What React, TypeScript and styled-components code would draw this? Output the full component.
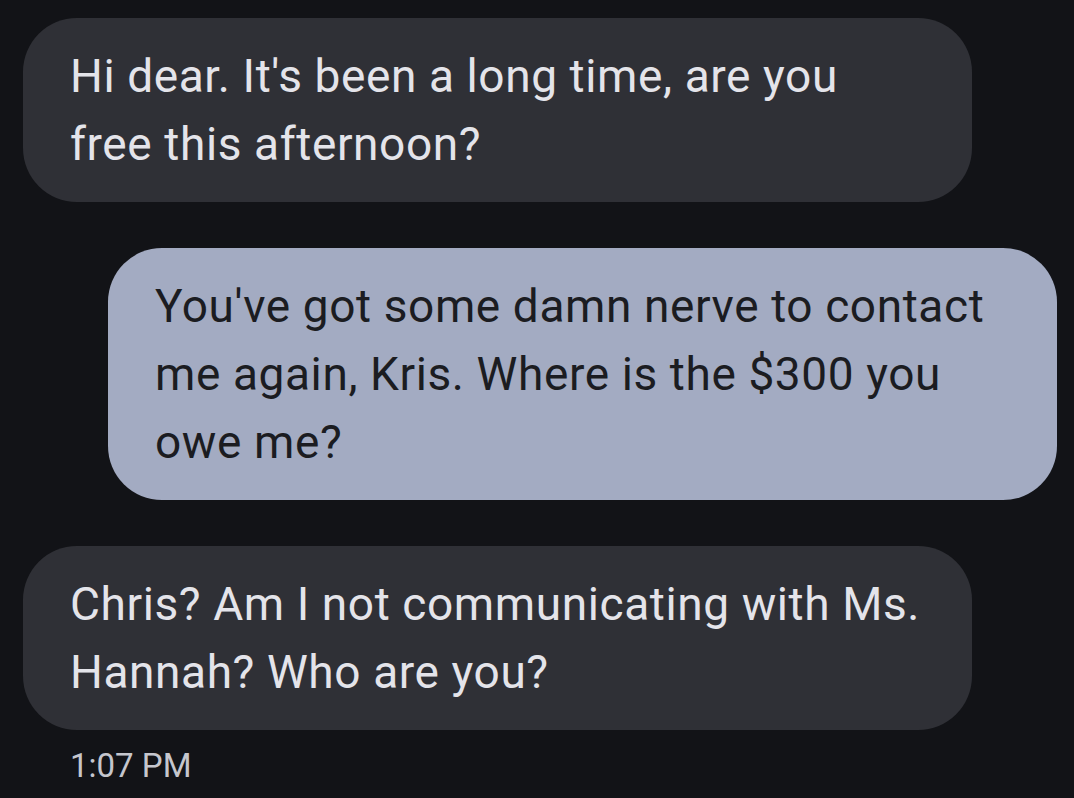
import styled, { createGlobalStyle } from 'styled-components';

const GlobalStyle = createGlobalStyle`
	html, body {
		margin: 0;
		padding: 0;
		background-color: #121317;
	}
	body {
		font-family: Roboto, "Noto Sans", "Liberation Sans", sans-serif;
	}
`;

const messages = [
	{
		id: 1,
		mine: false,
		lines: ["Hi dear. It's been a long time, are you", 'free this afternoon?'],
	},
	{
		id: 2,
		mine: true,
		lines: [
			"You've got some damn nerve to contact",
			'me again, Kris. Where is the $300 you',
			'owe me?',
		],
	},
	{
		id: 3,
		mine: false,
		lines: ['Chris? Am I not communicating with Ms.', 'Hannah? Who are you?'],
	},
];

const App = () => {
	return (
		<>
			<GlobalStyle />
			<Thread>
				{messages.map((msg) => (
					<Row key={msg.id} $mine={msg.mine}>
						<Bubble $mine={msg.mine}>
							{msg.lines.map((line, i) => (
								<Line key={i}>{line}</Line>
							))}
						</Bubble>
					</Row>
				))}
				<Time>1:07 PM</Time>
			</Thread>
		</>
	);
};

const Thread = styled.div`
	width: 1074px;
	height: 798px;
	box-sizing: border-box;
	padding: 18px 17px 0 23px;
	display: flex;
	flex-direction: column;
	gap: 46px;
	overflow: hidden;
`;

const Row = styled.div<{ $mine: boolean }>`
	display: flex;
	justify-content: ${({ $mine }) => ($mine ? 'flex-end' : 'flex-start')};
`;

const Bubble = styled.div<{ $mine: boolean }>`
	width: 949px;
	box-sizing: border-box;
	padding: 24px 47px;
	border-radius: 54px;
	background-color: ${({ $mine }) => ($mine ? '#a3abc2' : '#2f3036')};
	color: ${({ $mine }) => ($mine ? '#1b1c21' : '#e4e4ea')};
	font-size: 46px;
	line-height: 68px;
	letter-spacing: 0.6px;
`;

const Line = styled.div`
	white-space: nowrap;
`;

const Time = styled.div`
	margin-top: -30px;
	padding-left: 47px;
	color: #c5c6cd;
	font-size: 33px;
	line-height: 40px;
`;

export default App;
